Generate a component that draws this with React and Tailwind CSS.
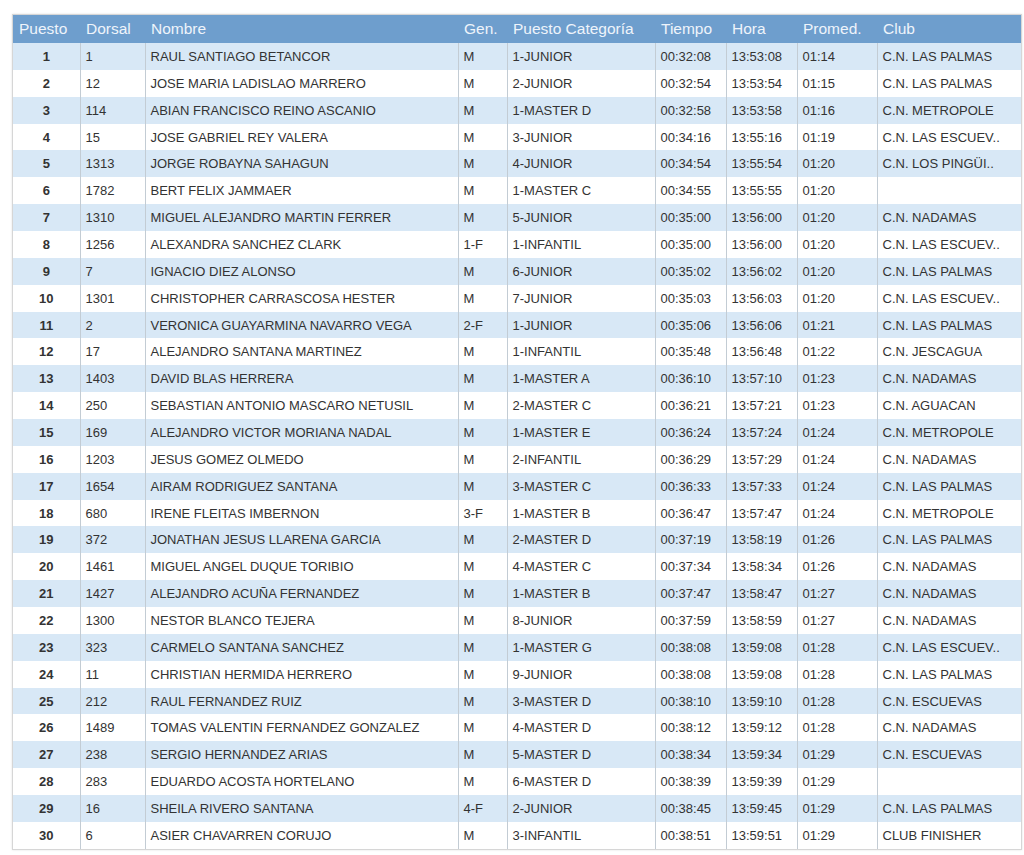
import React from "react";

const rows = [
  ["1", "1", "RAUL SANTIAGO BETANCOR", "M", "1-JUNIOR", "00:32:08", "13:53:08", "01:14", "C.N. LAS PALMAS"],
  ["2", "12", "JOSE MARIA LADISLAO MARRERO", "M", "2-JUNIOR", "00:32:54", "13:53:54", "01:15", "C.N. LAS PALMAS"],
  ["3", "114", "ABIAN FRANCISCO REINO ASCANIO", "M", "1-MASTER D", "00:32:58", "13:53:58", "01:16", "C.N. METROPOLE"],
  ["4", "15", "JOSE GABRIEL REY VALERA", "M", "3-JUNIOR", "00:34:16", "13:55:16", "01:19", "C.N. LAS ESCUEV.."],
  ["5", "1313", "JORGE ROBAYNA SAHAGUN", "M", "4-JUNIOR", "00:34:54", "13:55:54", "01:20", "C.N. LOS PINGÜI.."],
  ["6", "1782", "BERT FELIX JAMMAER", "M", "1-MASTER C", "00:34:55", "13:55:55", "01:20", ""],
  ["7", "1310", "MIGUEL ALEJANDRO MARTIN FERRER", "M", "5-JUNIOR", "00:35:00", "13:56:00", "01:20", "C.N. NADAMAS"],
  ["8", "1256", "ALEXANDRA SANCHEZ CLARK", "1-F", "1-INFANTIL", "00:35:00", "13:56:00", "01:20", "C.N. LAS ESCUEV.."],
  ["9", "7", "IGNACIO DIEZ ALONSO", "M", "6-JUNIOR", "00:35:02", "13:56:02", "01:20", "C.N. LAS PALMAS"],
  ["10", "1301", "CHRISTOPHER CARRASCOSA HESTER", "M", "7-JUNIOR", "00:35:03", "13:56:03", "01:20", "C.N. LAS ESCUEV.."],
  ["11", "2", "VERONICA GUAYARMINA NAVARRO VEGA", "2-F", "1-JUNIOR", "00:35:06", "13:56:06", "01:21", "C.N. LAS PALMAS"],
  ["12", "17", "ALEJANDRO SANTANA MARTINEZ", "M", "1-INFANTIL", "00:35:48", "13:56:48", "01:22", "C.N. JESCAGUA"],
  ["13", "1403", "DAVID BLAS HERRERA", "M", "1-MASTER A", "00:36:10", "13:57:10", "01:23", "C.N. NADAMAS"],
  ["14", "250", "SEBASTIAN ANTONIO MASCARO NETUSIL", "M", "2-MASTER C", "00:36:21", "13:57:21", "01:23", "C.N. AGUACAN"],
  ["15", "169", "ALEJANDRO VICTOR MORIANA NADAL", "M", "1-MASTER E", "00:36:24", "13:57:24", "01:24", "C.N. METROPOLE"],
  ["16", "1203", "JESUS GOMEZ OLMEDO", "M", "2-INFANTIL", "00:36:29", "13:57:29", "01:24", "C.N. NADAMAS"],
  ["17", "1654", "AIRAM RODRIGUEZ SANTANA", "M", "3-MASTER C", "00:36:33", "13:57:33", "01:24", "C.N. LAS PALMAS"],
  ["18", "680", "IRENE FLEITAS IMBERNON", "3-F", "1-MASTER B", "00:36:47", "13:57:47", "01:24", "C.N. METROPOLE"],
  ["19", "372", "JONATHAN JESUS LLARENA GARCIA", "M", "2-MASTER D", "00:37:19", "13:58:19", "01:26", "C.N. LAS PALMAS"],
  ["20", "1461", "MIGUEL ANGEL DUQUE TORIBIO", "M", "4-MASTER C", "00:37:34", "13:58:34", "01:26", "C.N. NADAMAS"],
  ["21", "1427", "ALEJANDRO ACUÑA FERNANDEZ", "M", "1-MASTER B", "00:37:47", "13:58:47", "01:27", "C.N. NADAMAS"],
  ["22", "1300", "NESTOR BLANCO TEJERA", "M", "8-JUNIOR", "00:37:59", "13:58:59", "01:27", "C.N. NADAMAS"],
  ["23", "323", "CARMELO SANTANA SANCHEZ", "M", "1-MASTER G", "00:38:08", "13:59:08", "01:28", "C.N. LAS ESCUEV.."],
  ["24", "11", "CHRISTIAN HERMIDA HERRERO", "M", "9-JUNIOR", "00:38:08", "13:59:08", "01:28", "C.N. LAS PALMAS"],
  ["25", "212", "RAUL FERNANDEZ RUIZ", "M", "3-MASTER D", "00:38:10", "13:59:10", "01:28", "C.N. ESCUEVAS"],
  ["26", "1489", "TOMAS VALENTIN FERNANDEZ GONZALEZ", "M", "4-MASTER D", "00:38:12", "13:59:12", "01:28", "C.N. NADAMAS"],
  ["27", "238", "SERGIO HERNANDEZ ARIAS", "M", "5-MASTER D", "00:38:34", "13:59:34", "01:29", "C.N. ESCUEVAS"],
  ["28", "283", "EDUARDO ACOSTA HORTELANO", "M", "6-MASTER D", "00:38:39", "13:59:39", "01:29", ""],
  ["29", "16", "SHEILA RIVERO SANTANA", "4-F", "2-JUNIOR", "00:38:45", "13:59:45", "01:29", "C.N. LAS PALMAS"],
  ["30", "6", "ASIER CHAVARREN CORUJO", "M", "3-INFANTIL", "00:38:51", "13:59:51", "01:29", "CLUB FINISHER"],
];

const headers = ["Puesto", "Dorsal", "Nombre", "Gen.", "Puesto Categoría", "Tiempo", "Hora", "Promed.", "Club"];
const widths = ["w-[67px]", "w-[65px]", "w-[313px]", "w-[49px]", "w-[148px]", "w-[71px]", "w-[71px]", "w-[80px]", "w-[144px]"];

export default function App() {
  return (
    <div className="min-h-[855px] bg-white pt-[14px] pl-[12px] font-['Liberation_Sans',Arial,sans-serif]">
      <div className="w-[1010px] border border-[#d6d6d6] shadow-[0_0_2px_rgba(0,0,0,0.12)]">
        <table className="w-[1008px] table-fixed border-collapse">
          <colgroup>
            {widths.map((w, i) => (
              <col key={i} className={w} />
            ))}
          </colgroup>
          <thead>
            <tr className="h-[28px] bg-[#6e9ecd]">
              {headers.map((h, i) => (
                <th
                  key={i}
                  className="px-[6px] text-left text-[15.5px] font-normal leading-none text-[#eef4fb] whitespace-nowrap overflow-hidden"
                >
                  {h}
                </th>
              ))}
            </tr>
          </thead>
          <tbody>
            {rows.map((r, ri) => (
              <tr key={ri} className={ri % 2 === 0 ? "h-[26.86px] bg-[#d8e8f6]" : "h-[26.86px] bg-white"}>
                {r.map((c, ci) => (
                  <td
                    key={ci}
                    className={
                      ci === 0
                        ? "text-center text-[13px] font-bold text-[#333] leading-none"
                        : "border-l border-[#c3ccd4] pl-[5px] text-[13px] text-[#333] leading-none whitespace-nowrap overflow-hidden"
                    }
                  >
                    {c}
                  </td>
                ))}
              </tr>
            ))}
          </tbody>
        </table>
      </div>
    </div>
  );
}
